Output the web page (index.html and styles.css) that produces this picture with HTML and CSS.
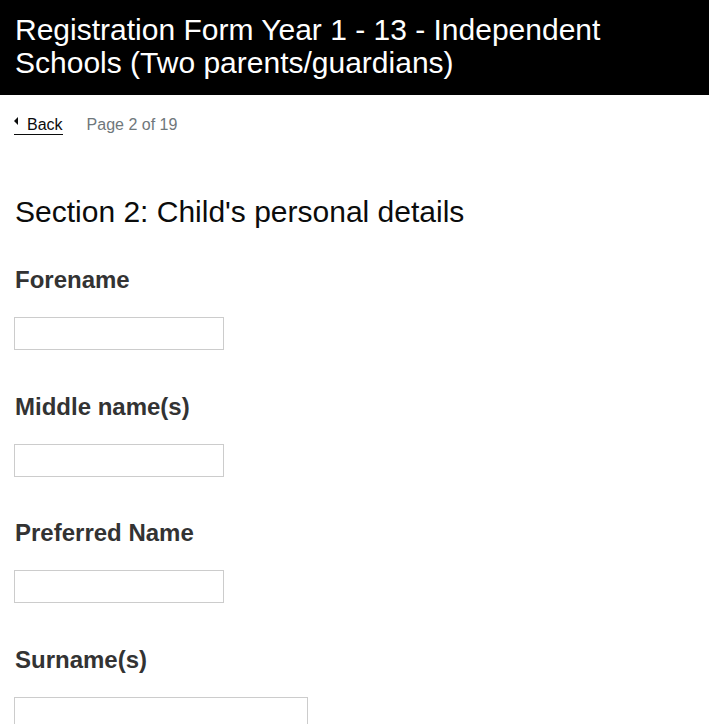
FILE: index.html
```html
<!DOCTYPE html>
<html lang="en">
<head>
<meta charset="utf-8">
<title>Registration Form</title>
<link rel="stylesheet" href="styles.css">
</head>
<body>
<header class="banner">
  <h1 class="banner-title">Registration Form Year 1 - 13 - Independent Schools (Two parents/guardians)</h1>
</header>
<main class="content">
  <nav class="pager">
    <a class="back-link" href="#"><span class="back-arrow"></span>Back</a>
    <span class="page-count">Page 2 of 19</span>
  </nav>
  <h2 class="section-title">Section 2: Child's personal details</h2>
  <div class="field">
    <label class="field-label" for="forename">Forename</label>
    <input class="field-input" id="forename" type="text">
  </div>
  <div class="field">
    <label class="field-label" for="middle">Middle name(s)</label>
    <input class="field-input" id="middle" type="text">
  </div>
  <div class="field">
    <label class="field-label" for="preferred">Preferred Name</label>
    <input class="field-input" id="preferred" type="text">
  </div>
  <div class="field">
    <label class="field-label" for="surname">Surname(s)</label>
    <input class="field-input field-input-wide" id="surname" type="text">
  </div>
</main>
</body>
</html>
```
FILE: styles.css
```css
html, body {
  margin: 0;
  padding: 0;
  background: #fff;
  font-family: "Liberation Sans", Arial, sans-serif;
}
.banner {
  background: #000;
  color: #fff;
  padding: 13px 15px 16px;
}
.banner-title {
  margin: 0;
  font-size: 30px;
  font-weight: normal;
  line-height: 33px;
}
.content {
  padding: 0 14px;
}
.pager {
  display: flex;
  align-items: baseline;
  gap: 24px;
  margin-top: 20px;
  font-size: 16px;
  line-height: 20px;
}
.back-link {
  display: inline-block;
  line-height: 18px;
  color: #0b0c0c;
  text-decoration: none;
  border-bottom: 1px solid #0b0c0c;
}
.back-arrow {
  display: inline-block;
  width: 0;
  height: 0;
  border-top: 4px solid transparent;
  border-bottom: 4px solid transparent;
  border-right: 4px solid #0b0c0c;
  margin-right: 9px;
  vertical-align: 5px;
}
.page-count {
  color: #6f777b;
}
.section-title {
  margin: 60px 0 0 1px;
  font-size: 30px;
  font-weight: normal;
  line-height: 34px;
  color: #0b0c0c;
}
.field {
  display: flex;
  flex-direction: column;
  align-items: flex-start;
}
.field-label {
  margin: 42.6px 0 0 1px;
  font-size: 24px;
  font-weight: bold;
  line-height: 28px;
  color: #333;
}
.section-title + .field .field-label {
  margin-top: 37px;
}
.field-input {
  margin-top: 23px;
  box-sizing: border-box;
  width: 210px;
  height: 33px;
  border: 1px solid #ccc;
  border-radius: 0;
  padding: 4px;
  font-family: inherit;
  font-size: 16px;
  background: #fff;
}
.field-input-wide {
  width: 294px;
}
```
